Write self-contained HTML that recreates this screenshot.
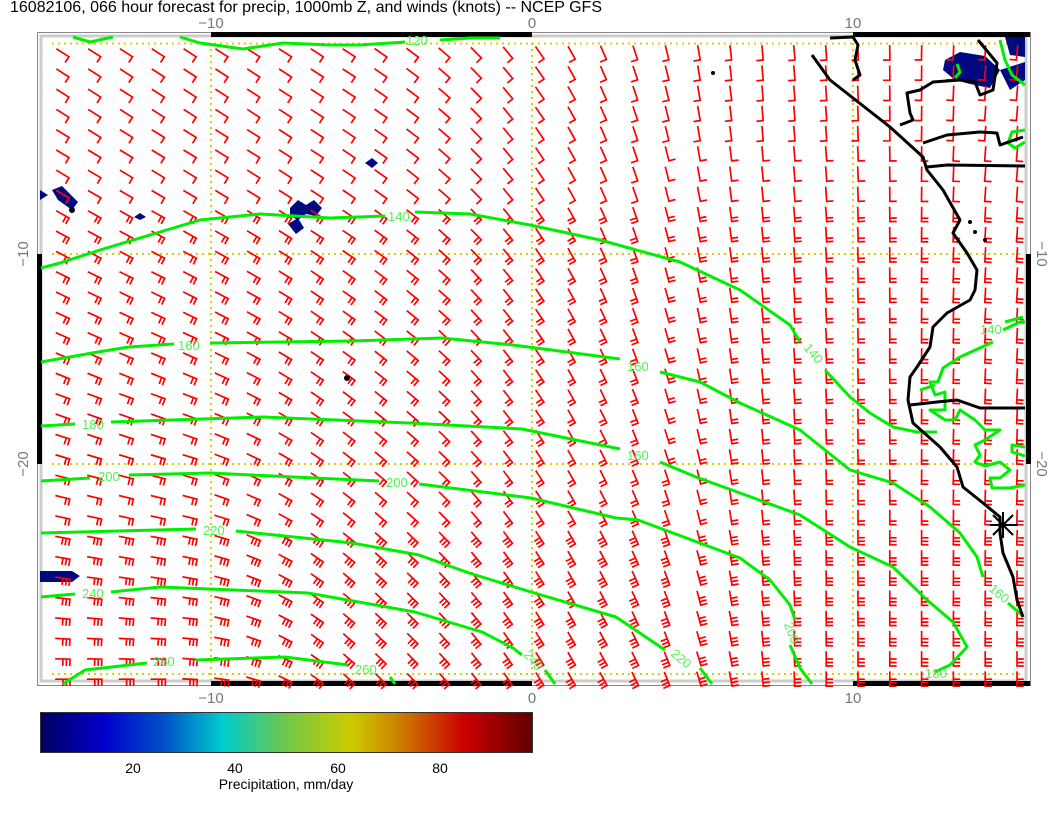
<!DOCTYPE html>
<html><head><meta charset="utf-8"><style>
html,body{margin:0;padding:0;background:#fff;}
body{width:1056px;height:816px;overflow:hidden;position:relative;font-family:"Liberation Sans",sans-serif;}
svg{position:absolute;left:0;top:0;}
</style></head><body>
<svg id="s" width="1056" height="816" viewBox="0 0 1056 816" xmlns="http://www.w3.org/2000/svg">
<defs>
<linearGradient id="cb" x1="0" x2="1" y1="0" y2="0">
<stop offset="0" stop-color="#000060"/>
<stop offset="0.13" stop-color="#0000cc"/>
<stop offset="0.25" stop-color="#0050c8"/>
<stop offset="0.37" stop-color="#00cccc"/>
<stop offset="0.5" stop-color="#70c848"/>
<stop offset="0.63" stop-color="#cccc00"/>
<stop offset="0.72" stop-color="#cc8800"/>
<stop offset="0.86" stop-color="#cc0000"/>
<stop offset="1" stop-color="#600000"/>
</linearGradient>
</defs>
<text x="10" y="12" font-size="16" fill="#000">16082106, 066 hour forecast for precip, 1000mb Z, and winds (knots) -- NCEP GFS</text>
<g font-size="15" fill="#777" text-anchor="middle">
<text x="211" y="28">−10</text><text x="532" y="28">0</text><text x="853" y="28">10</text>
<text x="211" y="703">−10</text><text x="532" y="703">0</text><text x="853" y="703">10</text>
<text transform="translate(28,254) rotate(-90)">−10</text>
<text transform="translate(28,464) rotate(-90)">−20</text>
<text transform="translate(1037,254) rotate(90)">−10</text>
<text transform="translate(1037,464) rotate(90)">−20</text>
</g>
<rect x="37.5" y="32.5" width="993" height="653" fill="none" stroke="#888" stroke-width="1"/>
<rect x="41" y="36" width="985" height="645" fill="none" stroke="#ccc" stroke-width="3"/>
<g fill="#000">
<rect x="211" y="32" width="321" height="5"/><rect x="853" y="32" width="177" height="5"/>
<rect x="211" y="681" width="321" height="5"/><rect x="853" y="681" width="177" height="5"/>
<rect x="37" y="254" width="5" height="210"/><rect x="1026" y="254" width="5" height="210"/>
</g>
<g stroke="#d8d000" stroke-width="2" stroke-dasharray="2,4" fill="none">
<line x1="52" y1="43.5" x2="1020" y2="43.5"/><line x1="52" y1="254" x2="1020" y2="254"/>
<line x1="52" y1="464" x2="1020" y2="464"/><line x1="52" y1="674" x2="1020" y2="674"/>
<line x1="211" y1="43" x2="211" y2="680"/><line x1="532" y1="43" x2="532" y2="680"/>
<line x1="853" y1="43" x2="853" y2="680"/>
</g>
<g fill="#000a80">
<path d="M290,208 L298,200 L306,205 L314,200 L322,208 L316,216 L306,214 L298,220 L290,216Z"/>
<path d="M288,224 L298,218 L304,228 L296,234Z"/>
<path d="M365,163 L372,158 L378,163 L372,168Z"/>
<path d="M52,190 L62,186 L78,202 L72,210 L58,200Z"/>
<path d="M40,190 L48,195 L40,200Z"/>
<path d="M134,217 L140,213 L146,217 L140,220Z"/>
<path d="M40,571 L72,571 L80,576 L72,582 L40,582Z"/>
<path d="M945,60 L960,52 L985,56 L1000,70 L990,88 L970,84 L955,80 L943,70Z"/>
<path d="M1005,37 L1025,37 L1025,57 L1010,55Z"/>
<path d="M1000,70 L1025,62 L1025,80 L1010,90Z"/>
</g>
<g id="barbs" stroke="#ff0000" stroke-width="1.7" fill="none" stroke-linecap="square"></g>
<g stroke="#00ee00" stroke-width="3" fill="none" stroke-linejoin="round">
<polyline points="73,37 90,42 113,37"/>
<polyline points="180,37 200,43 243,49 283,43 330,45 360,45 405,42"/>
<polyline points="440,40 470,38 500,38"/>
<polyline points="41,268 60,263 100,250 160,232 200,220 260,214 330,218 385,216"/>
<polyline points="415,212 470,214 530,225 600,240 680,262 740,290 790,325 800,342"/>
<polyline points="825,370 850,397 870,413 893,427 917,432 937,432"/>
<polyline points="41,362 98,352 129,347 174,344"/>
<polyline points="210,343 352,341 442,338 513,345 620,359"/>
<polyline points="660,372 700,382 740,403 800,430 850,470 893,483 930,507 960,533 977,557 983,577"/>
<polyline points="1008,603 1022,615"/>
<polyline points="41,426 75,424"/>
<polyline points="111,422 263,417 410,423 522,429 620,449"/>
<polyline points="660,462 696,477 740,493 800,515 850,547 893,567 927,600 953,622 967,647 950,665 935,672"/>
<polyline points="41,481 90,478"/>
<polyline points="129,475 210,473 379,481"/>
<polyline points="419,484 531,498 616,518 638,520 740,558 770,580 790,605 795,620"/>
<polyline points="790,645 800,668 812,684"/>
<polyline points="41,533 196,529"/>
<polyline points="236,531 352,543 419,555 469,573 531,592 616,617 665,650"/>
<polyline points="700,668 712,684"/>
<polyline points="41,597 75,594"/>
<polyline points="111,592 160,587 308,593 415,612 482,632 513,648 522,655"/>
<polyline points="545,670 555,684"/>
<polyline points="63,684 85,670 147,663"/>
<polyline points="196,660 285,657 348,665"/>
<polyline points="390,677 395,684"/>
<polyline points="1005,322 1023,317"/>
<polyline points="993,342 960,357 943,368 938,382 930,382 935,395 945,392 945,410 930,410 945,420 955,420 960,410 975,420 985,430 1000,430 985,440 975,445 980,455 975,462 985,466 1000,462 1010,470 1000,478 990,478 992,488 1010,488 1025,485"/>
<polyline points="920,390 935,385"/>
<polyline points="1025,447 1012,445 1012,452 1025,456"/>
<polyline points="1003,330 1020,322 1025,322"/>
<polyline points="1000,40 1005,60 1012,75 1025,85"/>
<polyline points="1025,130 1012,132 1008,143 1015,148 1025,142"/>
<polyline points="957,64 960,72 955,78"/>
</g>
<g font-size="13" fill="#55ee55">
<text x="406" y="45">120</text>
<text x="388" y="221">140</text>
<text x="178" y="350">160</text>
<text x="627" y="371">160</text>
<text x="82" y="429">180</text>
<text x="627" y="460">160</text>
<text x="98" y="481">200</text>
<text x="386" y="487">200</text>
<text x="203" y="535">220</text>
<text x="82" y="598">240</text>
<text x="153" y="666">260</text>
<text x="355" y="674">260</text>
<text transform="translate(523,655) rotate(50)">240</text>
<text transform="translate(670,655) rotate(40)">220</text>
<text transform="translate(784,624) rotate(70)">200</text>
<text transform="translate(803,348) rotate(50)">140</text>
<text transform="translate(988,590) rotate(40)">160</text>
<text x="925" y="678">180</text>
<text x="980" y="334">140</text>
</g>
<g stroke="#000" stroke-width="3" fill="none" stroke-linejoin="round">
<polyline points="812,55 830,80 853,98 890,127 923,157 927,170 943,190 960,220 953,233 967,253 977,270 975,290 970,300 947,313 933,327 930,347 917,367 910,377 908,400 913,423 940,447 957,467 963,487 983,503 1000,517 1000,533 1003,553 1013,577 1017,600 1023,617"/>
<polyline points="830,38 853,37 858,45 855,60 860,75 853,80"/>
<polyline points="978,40 997,63 993,90 980,95 975,82 960,80 933,82 920,90 907,93 910,113 913,120 900,125"/>
<polyline points="923,143 947,135 980,132 997,133 1000,145 1023,137"/>
<polyline points="927,167 947,165 1025,166"/>
<polyline points="910,405 937,402 957,400 980,408 1025,408"/>
</g>
<g fill="#000"><circle cx="347" cy="378" r="3"/><circle cx="72" cy="210" r="3"/><circle cx="713" cy="73" r="2"/><circle cx="970" cy="222" r="2"/><circle cx="975" cy="232" r="2"/><circle cx="985" cy="240" r="2"/></g>
<g stroke="#000" stroke-width="2"><line x1="990" y1="525" x2="1018" y2="525"/><line x1="1003" y1="512" x2="1003" y2="538"/><line x1="993" y1="515" x2="1013" y2="535"/><line x1="993" y1="535" x2="1013" y2="515"/></g>
<rect x="40.5" y="712.5" width="492" height="40" fill="url(#cb)" stroke="#333" stroke-width="1"/>
<g font-size="14" fill="#000" text-anchor="middle">
<text x="133" y="773">20</text><text x="235" y="773">40</text><text x="338" y="773">60</text><text x="440" y="773">80</text>
<text x="286" y="789">Precipitation, mm/day</text>
</g>
</svg>
<script>
(function(){
var g=document.getElementById('barbs'),out='';
function sm(a,b,t){t=(t-a)/(b-a);t=t<0?0:t>1?1:t;return t*t*(3-2*t);}
for(var j=0;j<32;j++){for(var i=0;i<31;i++){
var x=63+31.8*i,y=53+20.2*j;if(y>684||x>1022)continue;
var u=(x-40)/990,v=(y-50)/630;
var at=33+52*sm(0.3,0.75,u)+10*sm(0.75,1,u);
var ab=45*sm(0.12,0.35,u)+15*sm(0.35,0.55,u)+30*sm(0.55,0.8,u);
var w=Math.pow(v,1.6);var ad=at*(1-w)+ab*w;var a=ad*Math.PI/180;
var L=14,dx=Math.cos(a),dy=Math.sin(a);
var x0=x-dx*L/2,y0=y-dy*L/2,x1=x+dx*L/2,y1=y+dy*L/2;
var n=1+Math.round(2*v);
var d='M'+x0.toFixed(1)+','+y0.toFixed(1)+'L'+x1.toFixed(1)+','+y1.toFixed(1);
var px=-dy,py=dx;
if(ad>72&&y>150){px=dy;py=-dx;}
for(var k=0;k<n;k++){var bx=x1-dx*3.5*k,by=y1-dy*3.5*k;
d+='M'+bx.toFixed(1)+','+by.toFixed(1)+'l'+(px*6).toFixed(1)+','+(py*6).toFixed(1);}
out+='<path d="'+d+'"/>';}}
g.innerHTML=out;})();
</script>
</body></html>
